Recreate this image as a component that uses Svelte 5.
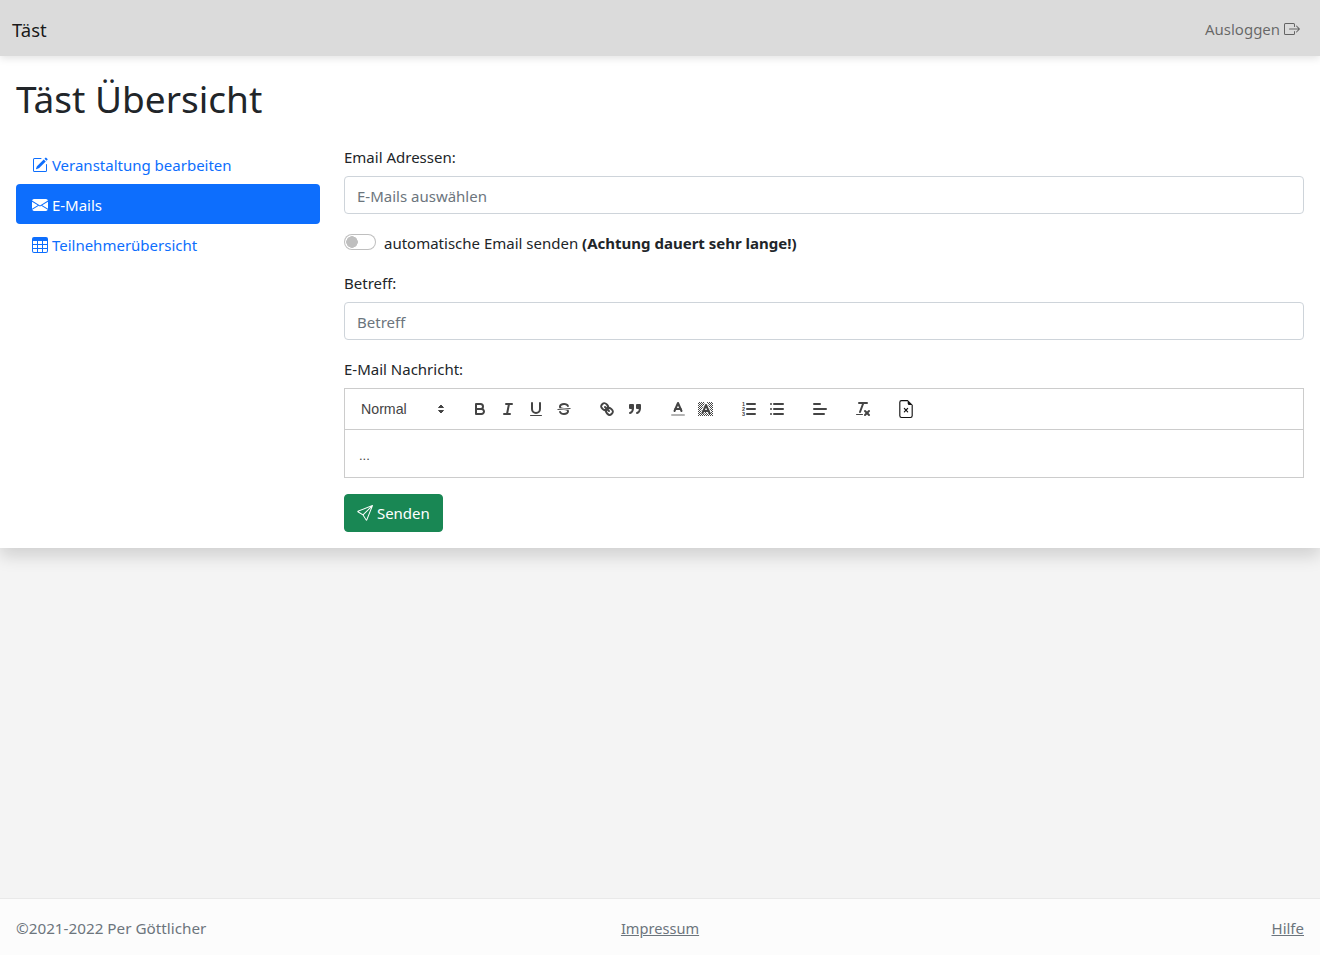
<script lang="ts">
    const dither: number[][] = [];
    for (let y = 2; y < 16; y++) {
        for (let x = 1; x < 16; x++) {
            if ((x + y) % 2 == 0) dither.push([x, y]);
        }
    }
</script>

<div class="page">
    <nav class="topbar">
        <span class="brand">Täst</span>
        <a class="logout" href="#top">
            Ausloggen
            <svg class="bi" viewBox="0 0 16 16" fill="currentColor"><path fill-rule="evenodd" d="M10 12.5a.5.5 0 0 1-.5.5h-8a.5.5 0 0 1-.5-.5v-9a.5.5 0 0 1 .5-.5h8a.5.5 0 0 1 .5.5v2a.5.5 0 0 0 1 0v-2A1.5 1.5 0 0 0 9.5 2h-8A1.5 1.5 0 0 0 0 3.5v9A1.5 1.5 0 0 0 1.5 14h8a1.5 1.5 0 0 0 1.5-1.5v-2a.5.5 0 0 0-1 0v2z"/><path fill-rule="evenodd" d="M15.854 8.354a.5.5 0 0 0 0-.708l-3-3a.5.5 0 0 0-.708.708L14.293 7.5H5.5a.5.5 0 0 0 0 1h8.793l-2.147 2.146a.5.5 0 0 0 .708.708l3-3z"/></svg>
        </a>
    </nav>

    <main class="card">
        <h1>Täst Übersicht</h1>
        <div class="columns">
            <ul class="side">
                <li><a href="#top">
                    <svg class="bi" viewBox="0 0 16 16" fill="currentColor"><path d="M15.502 1.94a.5.5 0 0 1 0 .706L14.459 3.69l-2-2L13.502.646a.5.5 0 0 1 .707 0l1.293 1.293zm-1.75 2.456-2-2L4.939 9.21a.5.5 0 0 0-.121.196l-.805 2.414a.25.25 0 0 0 .316.316l2.414-.805a.5.5 0 0 0 .196-.12l6.813-6.814z"/><path fill-rule="evenodd" d="M1 13.5A1.5 1.5 0 0 0 2.5 15h11a1.5 1.5 0 0 0 1.5-1.5v-6a.5.5 0 0 0-1 0v6a.5.5 0 0 1-.5.5h-11a.5.5 0 0 1-.5-.5v-11a.5.5 0 0 1 .5-.5H9a.5.5 0 0 0 0-1H2.5A1.5 1.5 0 0 0 1 2.5v11z"/></svg>
                    Veranstaltung bearbeiten
                </a></li>
                <li><a class="active" href="#top">
                    <svg class="bi" viewBox="0 0 16 16" fill="currentColor"><path d="M.05 3.555A2 2 0 0 1 2 2h12a2 2 0 0 1 1.95 1.555L8 8.414.05 3.555ZM0 4.697v7.104l5.803-3.558L0 4.697ZM6.761 8.83l-6.57 4.027A2 2 0 0 0 2 14h12a2 2 0 0 0 1.808-1.144l-6.57-4.027L8 9.586l-1.239-.757Zm3.436-.586L16 11.801V4.697l-5.803 3.546Z"/></svg>
                    E-Mails
                </a></li>
                <li><a href="#top">
                    <svg class="bi" viewBox="0 0 16 16" fill="currentColor"><path d="M0 2a2 2 0 0 1 2-2h12a2 2 0 0 1 2 2v12a2 2 0 0 1-2 2H2a2 2 0 0 1-2-2V2zm15 2h-4v3h4V4zm0 4h-4v3h4V8zm0 4h-4v3h3a1 1 0 0 0 1-1v-2zm-5 3v-3H6v3h4zm-5 0v-3H1v2a1 1 0 0 0 1 1h3zm-4-4h4V8H1v3zm0-4h4V4H1v3zm5-3v3h4V4H6zm4 4H6v3h4V8z"/></svg>
                    Teilnehmerübersicht
                </a></li>
            </ul>

            <form class="mailform">
                <label class="field-label" for="recipients">Email Adressen:</label>
                <input id="recipients" class="control" type="text" placeholder="E-Mails auswählen" />

                <div class="switch">
                    <input id="autosend" type="checkbox" />
                    <label for="autosend">automatische Email senden <b>(Achtung dauert sehr lange!)</b></label>
                </div>

                <label class="field-label" for="subject">Betreff:</label>
                <input id="subject" class="control" type="text" placeholder="Betreff" />

                <span class="field-label">E-Mail Nachricht:</span>
                <div class="editor">
                    <div class="toolbar">
                        <span class="formats">
                            <span class="picker">
                                Normal
                                <svg viewBox="0 0 18 18"><polygon class="fill thin" points="6.5 10.5 9 13 11.5 10.5 6.5 10.5"/><polygon class="fill thin" points="6.5 7.5 9 5 11.5 7.5 6.5 7.5"/></svg>
                            </span>
                        </span>
                        <span class="formats">
                            <span class="tool"><svg viewBox="0 0 18 18"><path class="line" d="M5,4H9.5A2.5,2.5,0,0,1,12,6.5v0A2.5,2.5,0,0,1,9.5,9H5A0,0,0,0,1,5,9V4A0,0,0,0,1,5,4Z"/><path class="line" d="M5,9h5.5A2.5,2.5,0,0,1,13,11.5v0A2.5,2.5,0,0,1,10.5,14H5a0,0,0,0,1,0,0V9A0,0,0,0,1,5,9Z"/></svg></span>
                            <span class="tool"><svg viewBox="0 0 18 18"><line class="line" x1="7" x2="13" y1="4" y2="4"/><line class="line" x1="5" x2="11" y1="14" y2="14"/><line class="line" x1="8" x2="10" y1="14" y2="4"/></svg></span>
                            <span class="tool"><svg viewBox="0 0 18 18"><path class="line" d="M5,3V9a4.012,4.012,0,0,0,4,4H9a4.012,4.012,0,0,0,4-4V3"/><rect class="fill" height="1" rx="0.5" ry="0.5" width="12" x="3" y="15"/></svg></span>
                            <span class="tool"><svg viewBox="0 0 18 18"><line class="thin" x1="15.5" x2="2.5" y1="8.5" y2="9.5"/><path class="fill" d="M9.007,8C6.542,7.791,6,7.519,6,6.5,6,5.792,7.283,5,9,5c1.571,0,2.765.679,2.969,1.309a1,1,0,0,0,1.9-.617C13.356,4.106,11.354,3,9,3,6.2,3,4,4.538,4,6.5a3.2,3.2,0,0,0,.5,1.843Z"/><path class="fill" d="M8.984,10C11.457,10.208,12,10.479,12,11.5c0,.708-1.283,1.5-3,1.5-1.571,0-2.765-.679-2.969-1.309a1,1,0,1,0-1.9.617C4.644,13.894,6.646,15,9,15c2.8,0,5-1.538,5-3.5a3.2,3.2,0,0,0-.5-1.843Z"/></svg></span>
                        </span>
                        <span class="formats">
                            <span class="tool"><svg viewBox="0 0 18 18"><line class="line" x1="7" x2="11" y1="7" y2="11"/><path class="line" d="M8.9,4.577a3.476,3.476,0,0,1,.36,4.679A3.476,3.476,0,0,1,4.577,8.9C3.185,7.5,2.035,6.4,4.217,4.217S7.5,3.185,8.9,4.577Z"/><path class="line" d="M13.423,9.1a3.476,3.476,0,0,0-4.679-.36,3.476,3.476,0,0,0,.36,4.679c1.392,1.392,2.5,2.542,4.679.36S14.815,10.5,13.423,9.1Z"/></svg></span>
                            <span class="tool"><svg viewBox="0 0 18 18"><rect class="fill line" height="3" width="3" x="4" y="5"/><rect class="fill line" height="3" width="3" x="11" y="5"/><path class="line" d="M7,8c0,4.031-3,5-3,5"/><path class="line" d="M14,8c0,4.031-3,5-3,5"/></svg></span>
                        </span>
                        <span class="formats">
                            <span class="tool"><svg viewBox="0 0 18 18"><line class="line faint" x1="3" x2="15" y1="15" y2="15"/><polyline class="line" points="5.5 11 9 3 12.5 11"/><line class="line" x1="11.63" x2="6.38" y1="9" y2="9"/></svg></span>
                            <span class="tool"><svg viewBox="0 0 18 18"><g class="fill">{#each dither as [x, y]}<rect {x} {y} width="1" height="1"/>{/each}</g><polyline class="halo" points="5.5 13 9 5 12.5 13"/><polyline class="line" points="5.5 13 9 5 12.5 13"/><line class="line" x1="11.63" x2="6.38" y1="11" y2="11"/></svg></span>
                        </span>
                        <span class="formats">
                            <span class="tool"><svg viewBox="0 0 18 18"><line class="line" x1="7" x2="15" y1="4" y2="4"/><line class="line" x1="7" x2="15" y1="9" y2="9"/><line class="line" x1="7" x2="15" y1="14" y2="14"/><text class="num" x="3.5" y="6">1</text><text class="num" x="3.5" y="11">2</text><text class="num" x="3.5" y="16">3</text></svg></span>
                            <span class="tool"><svg viewBox="0 0 18 18"><line class="line" x1="6" x2="15" y1="4" y2="4"/><line class="line" x1="6" x2="15" y1="9" y2="9"/><line class="line" x1="6" x2="15" y1="14" y2="14"/><line class="line" x1="3" x2="3" y1="4" y2="4"/><line class="line" x1="3" x2="3" y1="9" y2="9"/><line class="line" x1="3" x2="3" y1="14" y2="14"/></svg></span>
                        </span>
                        <span class="formats">
                            <span class="tool"><svg viewBox="0 0 18 18"><line class="line" x1="3" x2="15" y1="9" y2="9"/><line class="line" x1="3" x2="13" y1="14" y2="14"/><line class="line" x1="3" x2="9" y1="4" y2="4"/></svg></span>
                        </span>
                        <span class="formats">
                            <span class="tool"><svg viewBox="0 0 18 18"><line class="line" x1="5" x2="13" y1="3" y2="3"/><line class="line" x1="6" x2="9.35" y1="12" y2="3"/><line class="line" x1="11" x2="15" y1="11" y2="15"/><line class="line" x1="15" x2="11" y1="11" y2="15"/><rect class="fill" height="1" rx="0.5" ry="0.5" width="7" x="2" y="14"/></svg></span>
                        </span>
                        <span class="formats">
                            <span class="tool file"><svg viewBox="0 0 16 16" fill="currentColor"><path d="M6.854 7.146a.5.5 0 1 0-.708.708L7.293 9l-1.147 1.146a.5.5 0 0 0 .708.708L8 9.707l1.146 1.147a.5.5 0 0 0 .708-.708L8.707 9l1.147-1.146a.5.5 0 0 0-.708-.708L8 8.293 6.854 7.146z"/><path d="M14 14V4.5L9.5 0H4a2 2 0 0 0-2 2v12a2 2 0 0 0 2 2h8a2 2 0 0 0 2-2zM9.5 3A1.5 1.5 0 0 0 11 4.5h2V14a1 1 0 0 1-1 1H4a1 1 0 0 1-1-1V2a1 1 0 0 1 1-1h5.5v2z"/></svg></span>
                        </span>
                    </div>
                    <div class="content">...</div>
                </div>

                <button class="send" type="button">
                    <svg class="bi" viewBox="0 0 16 16" fill="currentColor"><path d="M15.854.146a.5.5 0 0 1 .11.54l-5.819 14.547a.75.75 0 0 1-1.329.124l-3.178-4.995L.643 7.184a.75.75 0 0 1 .124-1.33L15.314.037a.5.5 0 0 1 .54.11ZM6.636 10.07l2.761 4.338L14.13 2.576 6.636 10.07Zm6.787-8.201L1.591 6.602l4.339 2.76 7.494-7.493Z"/></svg>
                    Senden
                </button>
            </form>
        </div>
    </main>

    <footer class="bottom">
        <span class="copy">©2021-2022 Per Göttlicher</span>
        <a class="middle" href="#top">Impressum</a>
        <a class="right" href="#top">Hilfe</a>
    </footer>
</div>

<style>
    :global(body) {
        background: #f4f4f4;
        font-family: "Noto Sans", "Open Sans", sans-serif;
        font-size: 15px;
        color: #212529;
    }

    .page {
        height: 955px;
        display: flex;
        flex-direction: column;
    }

    .bi {
        width: 16px;
        height: 16px;
        vertical-align: -2px;
    }

    .topbar {
        height: 56px;
        flex: none;
        box-sizing: border-box;
        padding: 2px 20px 0 12px;
        background: #dbdbdb;
        display: flex;
        align-items: center;
        justify-content: space-between;
        position: relative;
        z-index: 1;
        box-shadow: 0 2px 8px rgba(0, 0, 0, 0.12);
    }

    .brand {
        font-size: 18.5px;
        color: rgba(0, 0, 0, 0.9);
    }

    .logout {
        color: rgba(0, 0, 0, 0.55);
        text-decoration: none;
    }

    .card {
        background: #fff;
        box-shadow: 0 8px 16px rgba(0, 0, 0, 0.15);
        padding: 16px;
    }

    h1 {
        margin: 0 0 24px;
        height: 48px;
        font-size: 37px;
        font-weight: 400;
        line-height: 54px;
    }

    .columns {
        display: grid;
        grid-template-columns: 304px 960px;
        gap: 24px;
    }

    .side {
        list-style: none;
        margin: 0;
        padding: 0;
    }

    .side a {
        display: block;
        height: 40px;
        box-sizing: border-box;
        padding: 0 16px;
        line-height: 42px;
        color: #0d6efd;
        text-decoration: none;
        border-radius: 4px;
    }

    .side a.active {
        background: #0d6efd;
        color: #fff;
    }

    .mailform {
        display: flex;
        flex-direction: column;
    }

    .field-label {
        display: block;
        height: 24px;
        line-height: 26px;
        margin-bottom: 8px;
    }

    .control {
        box-sizing: border-box;
        height: 38px;
        padding: 2px 12px 0;
        border: 1px solid #ced4da;
        border-radius: 4px;
        font: inherit;
        margin-bottom: 16px;
    }

    .control::placeholder {
        color: #6c757d;
    }

    .switch {
        display: flex;
        align-items: center;
        gap: 8px;
        height: 24px;
        margin-bottom: 16px;
    }

    .switch label {
        padding-top: 2px;
    }

    .switch input {
        appearance: none;
        width: 32px;
        height: 16px;
        margin: 0;
        border: 1px solid rgba(0, 0, 0, 0.25);
        border-radius: 16px;
        background: radial-gradient(circle at 7px 7px, #bfbfbf 5.5px, #fff 6px);
    }

    .editor {
        border: 1px solid #ccc;
        margin-bottom: 16px;
    }

    .toolbar {
        display: flex;
        height: 41px;
        box-sizing: border-box;
        padding: 8px;
        border-bottom: 1px solid #ccc;
        font-family: "Liberation Sans", Arial, sans-serif;
        font-size: 14.2px;
        color: #444;
    }

    .formats {
        display: flex;
        margin-right: 15px;
    }

    .picker {
        width: 98px;
        box-sizing: border-box;
        padding-left: 8px;
        line-height: 25px;
        position: relative;
    }

    .picker svg {
        position: absolute;
        right: 1px;
        top: 50%;
        width: 18px;
        height: 18px;
        margin-top: -9px;
    }

    .tool {
        width: 28px;
        height: 24px;
        display: flex;
        align-items: center;
        justify-content: center;
    }

    .tool svg {
        width: 18px;
        height: 18px;
    }

    .tool.file {
        color: #111;
    }

    .line {
        fill: none;
        stroke: #444;
        stroke-width: 2;
        stroke-linecap: round;
        stroke-linejoin: round;
    }

    .thin {
        fill: none;
        stroke: #444;
        stroke-width: 1;
    }

    .halo {
        fill: none;
        stroke: #fff;
        stroke-width: 4;
    }

    .faint {
        opacity: 0.4;
    }

    .fill,
    .fill.line,
    .fill.thin {
        fill: #444;
    }

    .num {
        font-size: 5.5px;
        font-weight: 700;
        fill: #444;
        text-anchor: middle;
    }

    .content {
        height: 47px;
        box-sizing: border-box;
        padding: 17px 14px 0;
        font-family: "Liberation Sans", Arial, sans-serif;
        font-size: 13px;
        line-height: 1.42;
        color: #444;
    }

    .send {
        align-self: flex-start;
        height: 38px;
        padding: 0 12px;
        border: 1px solid #198754;
        border-radius: 4px;
        background: #198754;
        color: #fff;
        font: inherit;
    }

    .bottom {
        margin-top: auto;
        height: 57px;
        box-sizing: border-box;
        padding: 2px 16px 0;
        display: grid;
        grid-template-columns: 1fr auto 1fr;
        align-items: center;
        background: #fcfcfc;
        border-top: 1px solid #e9e9e9;
        color: #6c757d;
    }

    .copy {
        font-size: 15.25px;
    }

    .bottom a {
        color: #6c757d;
    }

    .bottom .middle {
        font-size: 14.6px;
    }

    .bottom .right {
        justify-self: end;
    }
</style>
